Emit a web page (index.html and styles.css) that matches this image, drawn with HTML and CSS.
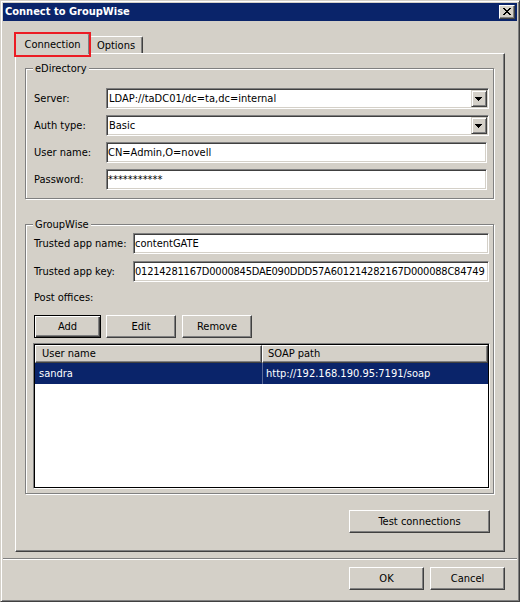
FILE: index.html
```html
<!DOCTYPE html>
<html lang="en">
<head>
<meta charset="utf-8">
<title>Connect to GroupWise</title>
<link rel="stylesheet" href="styles.css">
</head>
<body>
<div class="window">
  <div class="titlebar">
    <span class="title">Connect to GroupWise</span>
    <span class="close-btn" aria-label="Close">
      <svg width="8" height="7" viewBox="0 0 8 7" shape-rendering="crispEdges"><path d="M0 0h2v1H0zM6 0h2v1H6zM1 1h2v1H1zM5 1h2v1H5zM2 2h4v1H2zM3 3h2v1H3zM2 4h4v1H2zM1 5h2v1H1zM5 5h2v1H5zM0 6h2v1H0zM6 6h2v1H6z" fill="#000"/></svg>
    </span>
  </div>
  <div class="client">
    <div class="tabs">
      <div class="tab active">Connection<span class="mark"></span></div>
      <div class="tab inactive">Options</div>
    </div>
    <div class="panel">
      <div class="group edir">
        <div class="legend">eDirectory</div>
        <div class="rows">
          <div class="frow"><span class="lbl">Server:</span>
            <div class="combo"><span class="combo-value">LDAP://taDC01/dc=ta,dc=internal</span><span class="combo-btn"><svg width="7" height="4" viewBox="0 0 7 4" shape-rendering="crispEdges"><path d="M0 0h7v1H0zM1 1h5v1H1zM2 2h3v1H2zM3 3h1v1H3z" fill="#000"/></svg></span></div>
          </div>
          <div class="frow"><span class="lbl">Auth type:</span>
            <div class="combo"><span class="combo-value">Basic</span><span class="combo-btn"><svg width="7" height="4" viewBox="0 0 7 4" shape-rendering="crispEdges"><path d="M0 0h7v1H0zM1 1h5v1H1zM2 2h3v1H2zM3 3h1v1H3z" fill="#000"/></svg></span></div>
          </div>
          <div class="frow"><span class="lbl">User name:</span><input class="field wide" type="text" value="CN=Admin,O=novell" readonly></div>
          <div class="frow"><span class="lbl">Password:</span><input class="field wide pw" type="text" value="***********" readonly></div>
        </div>
      </div>
      <div class="group gw">
        <div class="legend">GroupWise</div>
        <div class="frow first"><span class="lbl">Trusted app name:</span><input class="field narrow" type="text" value="contentGATE" readonly></div>
        <div class="frow key"><span class="lbl">Trusted app key:</span><input class="field narrow keyval" type="text" value="01214281167D0000845DAE090DDD57A601214282167D000088C84749" readonly></div>
        <div class="po-label">Post offices:</div>
        <div class="po-buttons">
          <button class="btn default add">Add</button>
          <button class="btn edit">Edit</button>
          <button class="btn remove">Remove</button>
        </div>
        <div class="list">
          <div class="list-head">
            <div class="col-head">User name</div>
            <div class="col-head c2">SOAP path</div>
          </div>
          <div class="list-row selected">
            <div class="cell">sandra</div>
            <div class="cell c2">http://192.168.190.95:7191/soap</div>
          </div>
        </div>
      </div>
      <div class="panel-actions">
        <button class="btn test">Test connections</button>
      </div>
    </div>
    <div class="separator"></div>
    <div class="dialog-buttons">
      <button class="btn dlg">OK</button>
      <button class="btn dlg">Cancel</button>
    </div>
  </div>
</div>
</body>
</html>
```

FILE: styles.css
```css
* { box-sizing: border-box; }
html, body { margin: 0; padding: 0; }
body {
  width: 520px;
  height: 602px;
  overflow: hidden;
  background: #d4d0c8;
  font-family: "DejaVu Sans Condensed", "DejaVu Sans", Tahoma, sans-serif;
  font-size: 11px;
  color: #000;
}

.window {
  width: 520px;
  height: 602px;
  background: #d4d0c8;
  border: 1px solid;
  border-color: #d4d0c8 #404040 #404040 #d4d0c8;
  box-shadow: inset 1px 1px 0 #fff, inset -1px -1px 0 #808080;
  padding: 2px;
  display: flex;
  flex-direction: column;
}

.titlebar {
  height: 18px;
  flex: none;
  background: #0a246a;
  color: #fff;
  display: flex;
  align-items: center;
  justify-content: space-between;
  padding: 0 2px 0 2px;
}
.title { font-weight: bold; line-height: 18px; }

.close-btn {
  width: 16px;
  height: 14px;
  background: #d4d0c8;
  border: 1px solid;
  border-color: #fff #404040 #404040 #fff;
  box-shadow: inset -1px -1px 0 #808080;
  display: flex;
  align-items: center;
  justify-content: center;
  padding: 0 1px 1px 0;
}
.close-btn svg { display: block; }

.client { flex: 1; display: flex; flex-direction: column; }

.tabs {
  display: flex;
  align-items: flex-end;
  height: 20px;
  margin: 12px 0 0 12px;
}
.tab {
  background: #d4d0c8;
  border-top: 1px solid #fff;
  border-left: 1px solid #fff;
  border-right: 1px solid #404040;
  box-shadow: inset -1px 0 0 #808080;
  border-radius: 2px 2px 0 0;
  line-height: 13px;
  text-align: center;
}
.tab.active {
  position: relative;
  z-index: 1;
  width: 75px;
  height: 21px;
  margin-bottom: -1px;
  padding-top: 4px;
}
.tab.inactive {
  width: 53px;
  height: 17px;
  padding-top: 2px;
  border-left: 0;
}
.mark {
  position: absolute;
  left: -2px;
  top: -2px;
  width: 77px;
  height: 25px;
  border: 2px solid #ec1c24;
}

.panel {
  margin-left: 12px;
  width: 490px;
  height: 499px;
  flex: none;
  border: 1px solid;
  border-color: #fff #404040 #404040 #fff;
  box-shadow: inset -1px -1px 0 #808080;
  padding: 0 0 0 9px;
}

.group {
  width: 469px;
  border: 1px solid #808080;
  box-shadow: inset 1px 1px 0 #fff, 1px 1px 0 #fff;
  padding: 0 0 8px 8px;
}
.group.edir { margin-top: 14px; }
.group.gw { margin-top: 25px; padding-bottom: 4px; }

.legend {
  width: fit-content;
  margin: -7px 0 0 -1px;
  padding: 0 2px;
  line-height: 13px;
  background: #d4d0c8;
}

.rows { margin-top: 13px; }
.frow { display: flex; align-items: center; height: 21px; }
.frow + .frow { margin-top: 6px; }
.edir .lbl { width: 72px; flex: none; }
.gw .lbl { width: 99px; flex: none; }
.gw .frow.first { margin-top: 2px; }
.gw .frow.key { margin-top: 7px; }

.combo {
  width: 383px;
  height: 21px;
  display: flex;
  background: #fff;
  border: 1px solid;
  border-color: #808080 #fff #fff #808080;
  box-shadow: inset 1px 1px 0 #404040, inset -1px -1px 0 #d4d0c8;
  padding: 1px;
}
.combo-value { flex: 1; padding-left: 1px; line-height: 17px; white-space: nowrap; overflow: hidden; }
.combo-btn {
  width: 16px;
  flex: none;
  background: #d4d0c8;
  border: 1px solid;
  border-color: #d4d0c8 #404040 #404040 #d4d0c8;
  box-shadow: inset 1px 1px 0 #fff, inset -1px -1px 0 #808080;
  display: flex;
  align-items: center;
  justify-content: flex-start;
  padding-left: 3px;
}
.combo-btn svg { display: block; }

.field {
  height: 21px;
  font: inherit;
  color: #000;
  background: #fff;
  border: 1px solid;
  border-color: #808080 #fff #fff #808080;
  box-shadow: inset 1px 1px 0 #404040, inset -1px -1px 0 #d4d0c8;
  padding: 0 0 0 1px;
  margin: 0;
  outline: none;
}
.field.wide { width: 381px; }
.field.narrow { width: 356px; }
.field.keyval { letter-spacing: -0.22px; }

.po-label { margin-top: 9px; line-height: 13px; }

.po-buttons { display: flex; margin-top: 11px; }
.btn {
  font: inherit;
  color: #000;
  height: 23px;
  margin: 0;
  padding: 0;
  background: #d4d0c8;
  border: 1px solid;
  border-color: #fff #404040 #404040 #fff;
  box-shadow: inset -1px -1px 0 #808080;
  line-height: 13px;
}
.btn.default {
  border-color: #000;
  box-shadow: inset 1px 1px 0 #fff, inset -1px -1px 0 #404040, inset -2px -2px 0 #808080;
}
.btn.add { width: 67px; }
.btn.edit { width: 70px; margin-left: 5px; }
.btn.remove { width: 70px; margin-left: 6px; }

.list {
  width: 457px;
  height: 146px;
  margin: 5px 0 0 -1px;
  background: #fff;
  border: 1px solid;
  border-color: #808080 #fff #fff #808080;
  box-shadow: inset 0 0 0 1px #000;
  padding: 1px;
}
.list-head { display: grid; grid-template-columns: 227px 1fr; height: 18px; }
.col-head {
  background: #d4d0c8;
  border: 1px solid;
  border-color: #fff #404040 #404040 #fff;
  box-shadow: inset -1px -1px 0 #808080;
  padding-left: 6px;
  line-height: 15px;
  white-space: nowrap;
}
.col-head.c2 { padding-left: 5px; }
.list-row { display: grid; grid-template-columns: 227px 1fr; height: 21px; }
.list-row.selected { background: #0a246a; color: #fff; }
.cell { padding-left: 4px; line-height: 21px; white-space: nowrap; }
.cell.c2 { border-left: 1px solid #5a6a9a; padding-left: 3px; }

.panel-actions {
  display: flex;
  justify-content: flex-end;
  margin-top: 16px;
  padding-right: 14px;
}
.btn.test { width: 141px; }

.separator {
  flex: none;
  height: 2px;
  margin-top: 6px;
  border-top: 1px solid #808080;
  border-bottom: 1px solid #fff;
}

.dialog-buttons {
  display: flex;
  justify-content: flex-end;
  gap: 6px;
  margin-top: 7px;
  padding-right: 12px;
}
.btn.dlg { width: 75px; }
```
